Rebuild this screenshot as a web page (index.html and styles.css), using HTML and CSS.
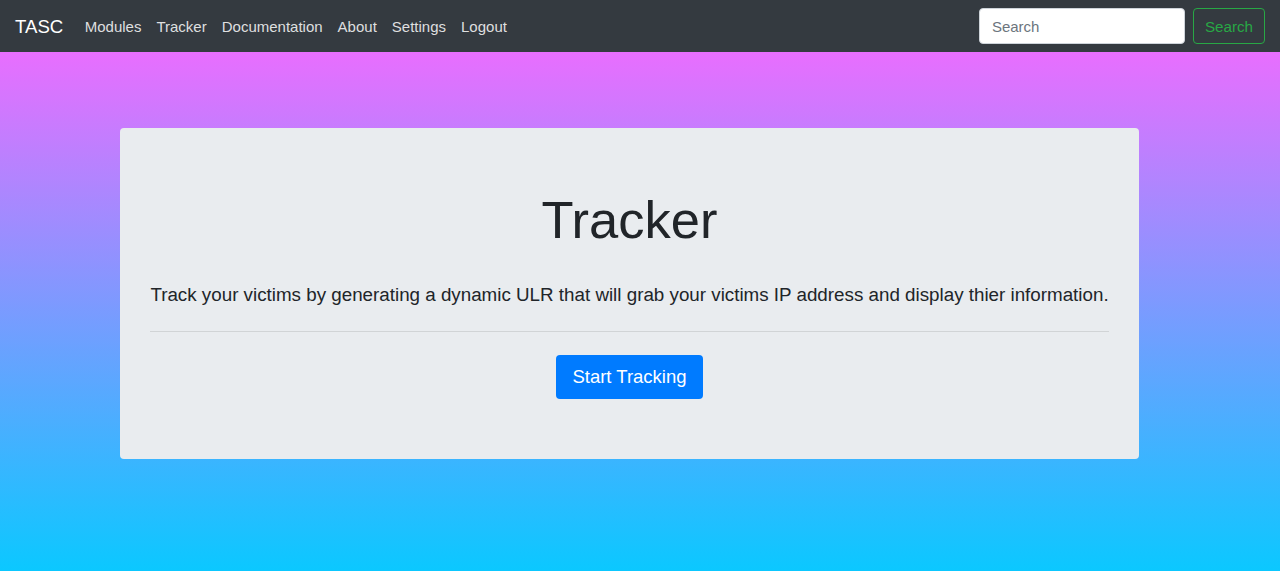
FILE: index.html
```html
<!DOCTYPE html>
<html lang="en">
<head>
<meta charset="utf-8">
<title>TASC - Tracker</title>
<link rel="stylesheet" href="styles.css">
</head>
<body>
<nav class="navbar">
  <div class="nav-left">
    <a class="brand" href="#">TASC</a>
    <ul class="nav-links">
      <li><a href="#">Modules</a></li>
      <li><a href="#">Tracker</a></li>
      <li><a href="#">Documentation</a></li>
      <li><a href="#">About</a></li>
      <li><a href="#">Settings</a></li>
      <li><a href="#">Logout</a></li>
    </ul>
  </div>
  <form class="search">
    <input class="search-input" type="search" placeholder="Search">
    <button class="search-btn" type="button">Search</button>
  </form>
</nav>
<main class="page">
  <section class="jumbotron">
    <h1 class="title">Tracker</h1>
    <p class="lead">Track your victims by generating a dynamic ULR that will grab your victims IP address and display thier information.</p>
    <hr class="divider">
    <div class="actions">
      <a class="btn-primary" href="#">Start Tracking</a>
    </div>
  </section>
</main>
</body>
</html>
```

FILE: styles.css
```css
* { box-sizing: border-box; }
html, body { margin: 0; padding: 0; height: 100%; }
body {
  font-family: "Liberation Sans", Arial, sans-serif;
  font-size: 16px;
  line-height: 1.5;
  color: #212529;
  background: linear-gradient(180deg, #e86efe 52px, #0bc8ff 100%);
  display: flex;
  flex-direction: column;
}
.navbar {
  background: #343a40;
  height: 52px;
  padding: 2px 15px 0 15px;
  display: flex;
  align-items: center;
  justify-content: space-between;
  flex-shrink: 0;
}
.nav-left { display: flex; align-items: center; }
.brand {
  color: #fff;
  font-size: 18.6px;
  text-decoration: none;
  margin-right: 14px;
}
.nav-links { list-style: none; margin: 0; padding: 0; display: flex; }
.nav-links a {
  color: rgba(255,255,255,0.85);
  text-decoration: none;
  font-size: 15px;
  padding: 0 7.5px;
}
.search { display: flex; align-items: center; margin: -2px 0 0; }
.search-input {
  width: 206px;
  height: 36px;
  border: 1px solid #ced4da;
  border-radius: 4px;
  padding: 6px 12px;
  font-family: inherit;
  font-size: 15px;
  color: #495057;
  background: #fff;
  margin-right: 8px;
  outline: none;
}
.search-input::placeholder { color: #6c757d; }
.search-btn {
  height: 36px;
  padding: 0 11px;
  background: transparent;
  border: 1px solid #28a745;
  color: #28a745;
  border-radius: 4px;
  font-family: inherit;
  font-size: 15.2px;
}
.page {
  flex: 1;
  padding: 76px 0 0 120px;
}
.jumbotron {
  width: 1019px;
  background: #e9ecef;
  border-radius: 4px;
  padding: 60px 30px 60px 30px;
}
.title {
  margin: 0 0 30px;
  text-align: center;
  font-size: 52.5px;
  font-weight: 400;
  line-height: 1.2;
}
.lead {
  margin: 0 0 22px;
  font-size: 18.8px;
  line-height: 1.5;
  text-align: center;
  white-space: nowrap;
}
.divider {
  border: 0;
  border-top: 1px solid rgba(0,0,0,0.1);
  margin: 0 0 23px;
}
.actions { display: flex; justify-content: center; }
.btn-primary {
  display: inline-block;
  background: #007bff;
  color: #fff;
  text-decoration: none;
  font-size: 18.5px;
  line-height: 28px;
  padding: 8px 16px;
  border-radius: 4px;
}
```
